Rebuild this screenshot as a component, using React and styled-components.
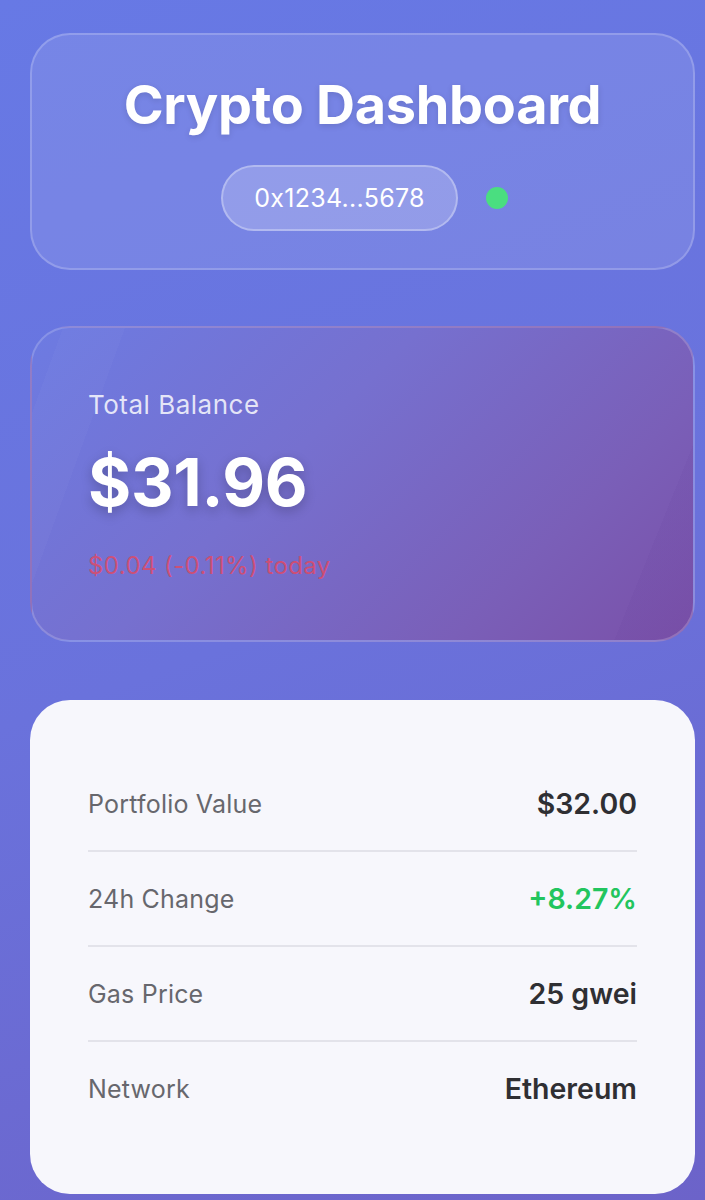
import React from "react";
import styled, { createGlobalStyle } from "styled-components";

const Global = createGlobalStyle`
  html, body { margin: 0; padding: 0; }
  body {
    font-family: Inter, "Noto Sans", "Liberation Sans", sans-serif;
    background: linear-gradient(160deg, #6779e5 0%, #6a72dc 50%, #6c63c9 100%);
    min-height: 1200px;
  }
  * { box-sizing: border-box; }
`;

const Page = styled.div`
  display: flex;
  flex-direction: column;
  gap: 56px;
  padding: 33px 10px 7px 30px;
  min-height: 1200px;
  background: linear-gradient(160deg, #6779e5 0%, #6a72dc 50%, #6c63c9 100%);
`;

const HeaderCard = styled.header`
  display: flex;
  flex-direction: column;
  align-items: center;
  gap: 28px;
  padding: 38px 20px 37px;
  border-radius: 40px;
  background: rgba(255, 255, 255, 0.1);
  border: 2px solid rgba(255, 255, 255, 0.2);
`;

const Title = styled.h1`
  margin: 0;
  font-size: 54px;
  line-height: 64px;
  font-weight: 700;
  color: #ffffff;
  letter-spacing: -0.3px;
  text-shadow: 0 2px 6px rgba(0, 0, 0, 0.12);
`;

const WalletRow = styled.div`
  display: flex;
  align-items: center;
  gap: 28px;
  margin-left: 4px;
`;

const AddressPill = styled.div`
  padding: 16px 31px;
  border-radius: 999px;
  background: rgba(255, 255, 255, 0.2);
  border: 2px solid rgba(255, 255, 255, 0.3);
  color: #ffffff;
  font-size: 25px;
  line-height: 30px;
  letter-spacing: 0.3px;
`;

const StatusDot = styled.span`
  width: 22px;
  height: 22px;
  border-radius: 50%;
  background: #4ade80;
`;

const BalanceCard = styled.section`
  position: relative;
  overflow: hidden;
  display: flex;
  flex-direction: column;
  margin-bottom: 2px;
  padding: 61px 56px 60px;
  border-radius: 40px;
  border: 2px solid rgba(255, 255, 255, 0.18);
  background: linear-gradient(135deg, #6d7be2 0%, #7670cf 40%, #7a5fb8 75%, #7a50a8 100%);
  &::before {
    content: "";
    position: absolute;
    inset: 0;
    background:
      linear-gradient(110deg, rgba(255,255,255,0) 0 4%, rgba(255,255,255,0.025) 4% 12%, rgba(255,255,255,0) 12%),
      linear-gradient(112deg, rgba(0,0,0,0) 0 90%, rgba(60,20,120,0.04) 90%);
    pointer-events: none;
  }
`;

const BalanceLabel = styled.div`
  position: relative;
  font-size: 26px;
  line-height: 32px;
  letter-spacing: 0.5px;
  color: rgba(255, 255, 255, 0.82);
`;

const BalanceAmount = styled.div`
  position: relative;
  margin-top: 22px;
  font-size: 66px;
  line-height: 78px;
  font-weight: 700;
  color: #ffffff;
  letter-spacing: -0.3px;
  text-shadow: 0 4px 12px rgba(0, 0, 0, 0.22);
`;

const BalanceChange = styled.div`
  position: relative;
  margin-top: 31px;
  font-size: 24px;
  line-height: 28px;
  letter-spacing: 0.4px;
  color: ${(p) => (p.$up ? "rgba(74, 222, 128, 0.8)" : "rgba(239, 68, 84, 0.72)")};
`;

const StatsCard = styled.section`
  display: flex;
  flex-direction: column;
  padding: 57px 58px 59px;
  border-radius: 40px;
  background: #f7f7fc;
`;

const StatRow = styled.div`
  display: flex;
  justify-content: space-between;
  align-items: center;
  padding: 32px 0 31px;
  border-bottom: 2px solid #e3e3ea;
  &:last-child { border-bottom: none; }
`;

const StatLabel = styled.span`
  font-size: 25px;
  line-height: 30px;
  letter-spacing: 0.2px;
  color: #67676d;
`;

const StatValue = styled.span`
  font-size: 28.5px;
  line-height: 30px;
  font-weight: 600;
  color: ${(p) => p.$color || "#2f2f33"};
`;

const stats = [
  { label: "Portfolio Value", value: "$32.00" },
  { label: "24h Change", value: "+8.27%", color: "#22c55e" },
  { label: "Gas Price", value: "25 gwei" },
  { label: "Network", value: "Ethereum" },
];

export default function App() {
  return (
    <>
      <Global />
      <Page>
        <HeaderCard>
          <Title>Crypto Dashboard</Title>
          <WalletRow>
            <AddressPill>0x1234...5678</AddressPill>
            <StatusDot />
          </WalletRow>
        </HeaderCard>
        <BalanceCard>
          <BalanceLabel>Total Balance</BalanceLabel>
          <BalanceAmount>$31.96</BalanceAmount>
          <BalanceChange>$0.04 (-0.11%) today</BalanceChange>
        </BalanceCard>
        <StatsCard>
          {stats.map((s) => (
            <StatRow key={s.label}>
              <StatLabel>{s.label}</StatLabel>
              <StatValue $color={s.color}>{s.value}</StatValue>
            </StatRow>
          ))}
        </StatsCard>
      </Page>
    </>
  );
}
